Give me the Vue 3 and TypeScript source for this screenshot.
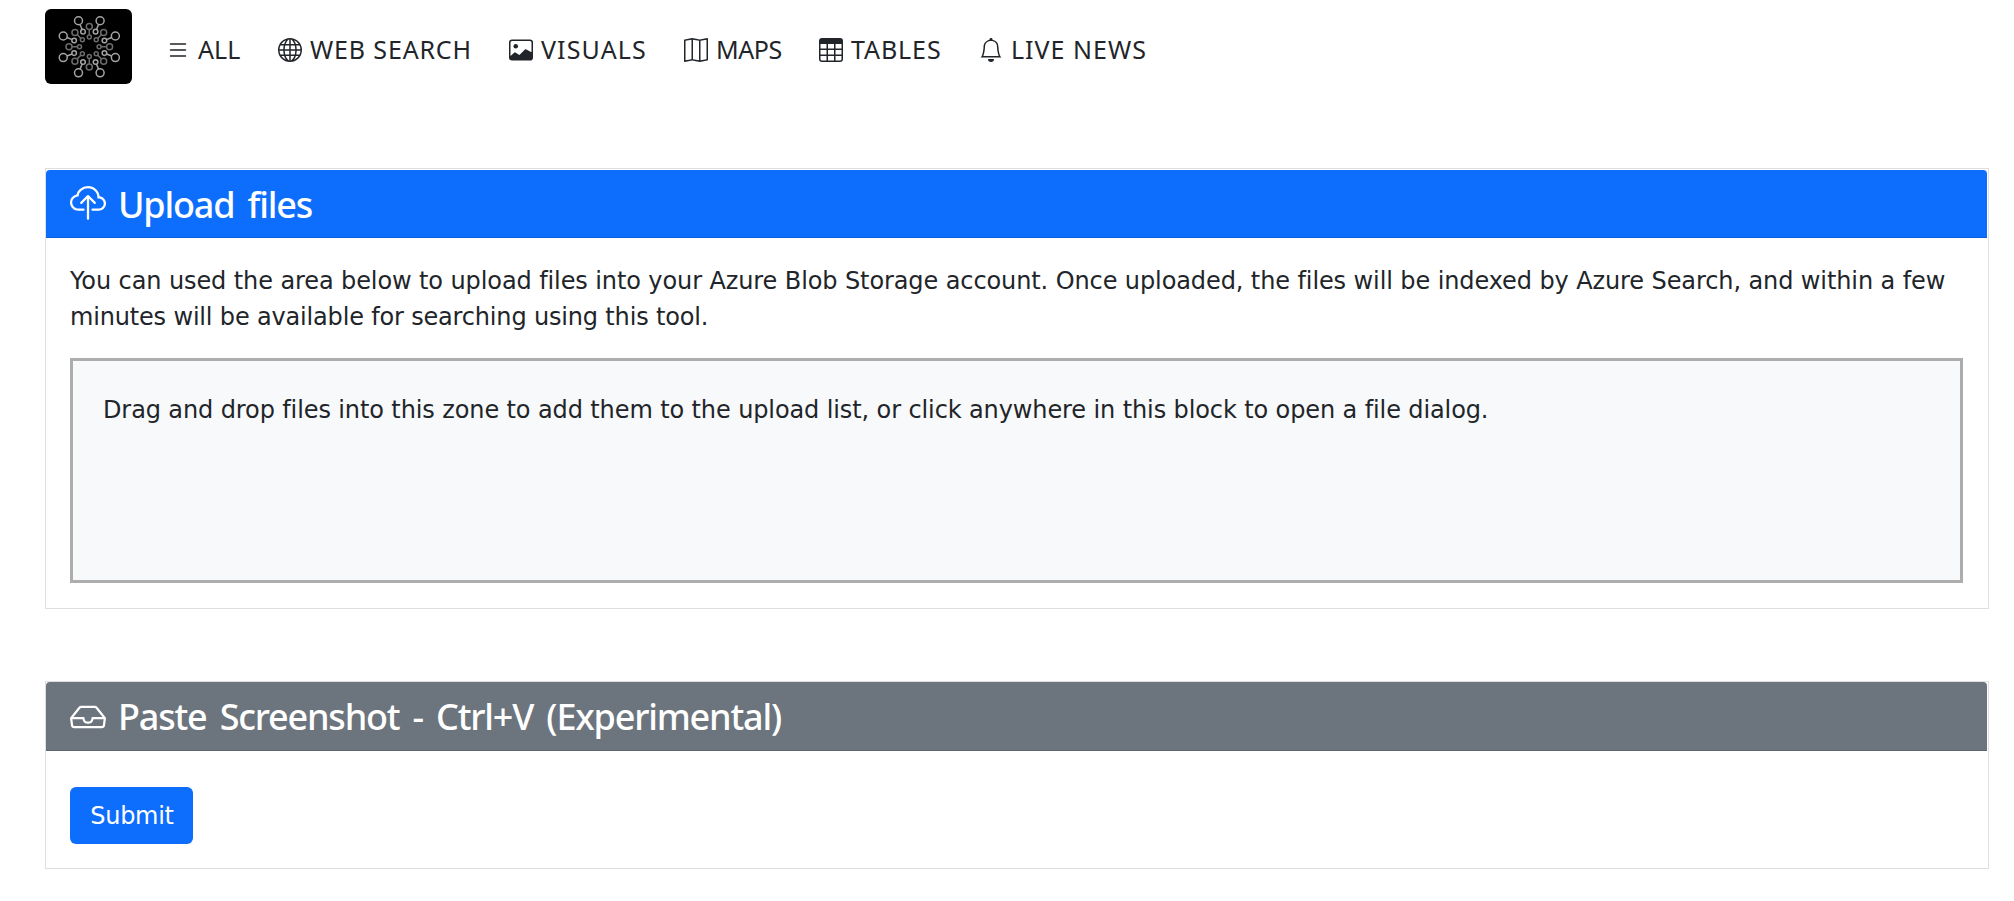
<script setup lang="ts">
interface NavItem {
  label: string
  spacing: number
  icon: string[]
}

interface Node {
  x1: number
  y1: number
  x2: number
  y2: number
}

const navItems: NavItem[] = [
  {
    label: 'ALL',
    spacing: 0.1,
    icon: ['M2.5 12a.5.5 0 0 1 .5-.5h10a.5.5 0 0 1 0 1H3a.5.5 0 0 1-.5-.5zm0-4a.5.5 0 0 1 .5-.5h10a.5.5 0 0 1 0 1H3a.5.5 0 0 1-.5-.5zm0-4a.5.5 0 0 1 .5-.5h10a.5.5 0 0 1 0 1H3a.5.5 0 0 1-.5-.5z'],
  },
  {
    label: 'WEB SEARCH',
    spacing: 0.85,
    icon: ['M0 8a8 8 0 1 1 16 0A8 8 0 0 1 0 8zm7.5-6.923c-.67.204-1.335.82-1.887 1.855A7.97 7.97 0 0 0 5.145 4H7.5V1.077zM4.09 4a9.267 9.267 0 0 1 .64-1.539 6.7 6.7 0 0 1 .597-.933A7.025 7.025 0 0 0 2.255 4H4.09zm-.582 3.5c.03-.877.138-1.718.312-2.5H1.674a6.958 6.958 0 0 0-.656 2.5h2.49zM4.847 5a12.5 12.5 0 0 0-.338 2.5H7.5V5H4.847zM8.5 5v2.5h2.99a12.495 12.495 0 0 0-.337-2.5H8.5zM4.51 8.5a12.5 12.5 0 0 0 .337 2.5H7.5V8.5H4.51zm3.99 0V11h2.653c.187-.765.306-1.608.338-2.5H8.5zM5.145 12c.138.386.295.744.468 1.068.552 1.035 1.218 1.65 1.887 1.855V12H5.145zm.182 2.472a6.696 6.696 0 0 1-.597-.933A9.268 9.268 0 0 1 4.09 12H2.255a7.024 7.024 0 0 0 3.072 2.472zM3.82 11a13.652 13.652 0 0 1-.312-2.5h-2.49c.062.89.291 1.733.656 2.5H3.82zm6.853 3.472A7.024 7.024 0 0 0 13.745 12H11.91a9.27 9.27 0 0 1-.64 1.539 6.688 6.688 0 0 1-.597.933zM8.5 12v2.923c.67-.204 1.335-.82 1.887-1.855.173-.324.33-.682.468-1.068H8.5zm3.68-1h2.146c.365-.767.594-1.61.656-2.5h-2.49a13.65 13.65 0 0 1-.312 2.5zm2.802-3.5a6.959 6.959 0 0 0-.656-2.5H12.18c.174.782.282 1.623.312 2.5h2.49zM11.27 2.461c.247.464.462.98.64 1.539h1.835a7.024 7.024 0 0 0-3.072-2.472c.218.284.418.598.597.933zM10.855 4a7.966 7.966 0 0 0-.468-1.068C9.835 1.897 9.17 1.282 8.5 1.077V4h2.355z'],
  },
  {
    label: 'VISUALS',
    spacing: 1.1,
    icon: [
      'M6.002 5.5a1.5 1.5 0 1 1-3 0 1.5 1.5 0 0 1 3 0z',
      'M2.002 1a2 2 0 0 0-2 2v10a2 2 0 0 0 2 2h12a2 2 0 0 0 2-2V3a2 2 0 0 0-2-2h-12zm12 1a1 1 0 0 1 1 1v6.5l-3.777-1.947a.5.5 0 0 0-.577.093l-3.71 3.71-2.66-1.772a.5.5 0 0 0-.63.062L1.002 12V3a1 1 0 0 1 1-1h12z',
    ],
  },
  {
    label: 'MAPS',
    spacing: -0.4,
    icon: ['M15.817.113A.5.5 0 0 1 16 .5v14a.5.5 0 0 1-.402.49l-5 1a.502.502 0 0 1-.196 0L5.5 15.01l-4.902.98A.5.5 0 0 1 0 15.5v-14a.5.5 0 0 1 .402-.49l5-1a.5.5 0 0 1 .196 0L10.5.99l4.902-.98a.5.5 0 0 1 .415.103zM10 1.91l-4-.8v12.98l4 .8V1.91zm1 12.98 4-.8V1.11l-4 .8v12.98zm-6-.8V1.11l-4 .8v12.98l4-.8z'],
  },
  {
    label: 'TABLES',
    spacing: 0.9,
    icon: ['M0 2a2 2 0 0 1 2-2h12a2 2 0 0 1 2 2v12a2 2 0 0 1-2 2H2a2 2 0 0 1-2-2V2zm15 2h-4v3h4V4zm0 4h-4v3h4V8zm0 4h-4v3h3a1 1 0 0 0 1-1v-2zm-5 3v-3H6v3h4zm-5 0v-3H1v2a1 1 0 0 0 1 1h3zm-4-4h4V8H1v3zm0-4h4V4H1v3zm5-3v3h4V4H6zm4 4H6v3h4V8z'],
  },
  {
    label: 'LIVE NEWS',
    spacing: 1,
    icon: ['M8 16a2 2 0 0 0 2-2H6a2 2 0 0 0 2 2zM8 1.918l-.797.161A4.002 4.002 0 0 0 4 6c0 .628-.134 2.197-.459 3.742-.16.767-.376 1.566-.663 2.258h10.244c-.287-.692-.502-1.49-.663-2.258C12.134 8.197 12 6.628 12 6a4.002 4.002 0 0 0-3.203-3.92L8 1.917zM14.22 12c.223.447.481.801.78 1H1c.299-.199.557-.553.78-1C2.68 10.2 3 6.88 3 6c0-2.42 1.72-4.44 4.005-4.901a1 1 0 1 1 1.99 0A5.002 5.002 0 0 1 13 6c0 .88.32 4.2 1.22 6z'],
  },
]

// Eight spokes around the logo centre, each joining an inner and an outer ring
function spokes(offset: number, inner: number, outer: number): Node[] {
  return Array.from({ length: 8 }, (_, i) => {
    const a = ((offset + i * 45) * Math.PI) / 180
    return {
      x1: Math.cos(a) * inner,
      y1: Math.sin(a) * inner,
      x2: Math.cos(a) * outer,
      y2: Math.sin(a) * outer,
    }
  })
}

// Shortens a spoke so its line stops at the edge of both rings
function link(n: Node, ri: number, ro: number): string {
  const len = Math.hypot(n.x2 - n.x1, n.y2 - n.y1)
  const ux = (n.x2 - n.x1) / len
  const uy = (n.y2 - n.y1) / len
  return `M${n.x1 + ux * ri} ${n.y1 + uy * ri}L${n.x2 - ux * ro} ${n.y2 - uy * ro}`
}

const longSpokes = spokes(22.5, 16.4, 28.2)
const shortSpokes = spokes(0, 9.8, 20.3)
</script>

<template>
  <div class="page">
    <header class="topbar">
      <svg class="logo" viewBox="-44.3 -37.8 87 75">
        <g class="short">
          <template v-for="(n, i) in shortSpokes" :key="i">
            <circle :cx="n.x1" :cy="n.y1" r="2" />
            <circle :cx="n.x2" :cy="n.y2" r="3" />
            <path :d="link(n, 2, 3)" />
          </template>
        </g>
        <g class="long">
          <template v-for="(n, i) in longSpokes" :key="i">
            <circle :cx="n.x1" :cy="n.y1" r="2.3" />
            <circle :cx="n.x2" :cy="n.y2" r="4" />
            <path :d="link(n, 2.3, 4)" />
          </template>
        </g>
      </svg>
      <nav class="nav">
        <a v-for="item in navItems" :key="item.label" class="nav-item">
          <svg class="nav-icon" viewBox="0 0 16 16">
            <path v-for="d in item.icon" :key="d" :d="d" fill-rule="evenodd" />
          </svg>
          <span :style="{ letterSpacing: item.spacing + 'px' }">{{ item.label }}</span>
        </a>
      </nav>
    </header>

    <main class="content">
      <section class="card upload">
        <h3 class="card-header primary">
          <svg class="head-icon" viewBox="0 0 16 16">
            <path d="M4.406 1.342A5.53 5.53 0 0 1 8 0c2.69 0 4.923 2 5.166 4.579C14.758 4.804 16 6.137 16 7.773 16 9.569 14.502 11 12.687 11H10a.5.5 0 0 1 0-1h2.688C13.979 10 15 8.988 15 7.773c0-1.216-1.02-2.228-2.313-2.228h-.5v-.5C12.188 2.825 10.328 1 8 1a4.53 4.53 0 0 0-2.941 1.1c-.757.652-1.153 1.438-1.153 2.055v.448l-.445.049C2.064 4.805 1 5.952 1 7.318 1 8.785 2.23 10 3.781 10H6a.5.5 0 0 1 0 1H3.781C1.708 11 0 9.366 0 7.318c0-1.763 1.266-3.223 2.942-3.593.143-.863.698-1.723 1.464-2.383z" />
            <path d="M7.646 4.146a.5.5 0 0 1 .708 0l3 3a.5.5 0 0 1-.708.708L8.5 5.707V14.5a.5.5 0 0 1-1 0V5.707L5.354 7.854a.5.5 0 1 1-.708-.708l3-3z" />
          </svg>
          <span>Upload files</span>
        </h3>
        <div class="card-body">
          <p class="intro">
            You can used the area below to upload files into your Azure Blob Storage account. Once uploaded, the files will be indexed by Azure Search, and within a few<br />
            <span class="second">minutes will be available for searching using this tool.</span>
          </p>
          <div class="dropzone">
            Drag and drop files into this zone to add them to the upload list, or click anywhere in this block to open a file dialog.
          </div>
        </div>
      </section>

      <section class="card paste">
        <h3 class="card-header secondary">
          <svg class="head-icon" viewBox="0 0 16 16">
            <path d="M4.98 4a.5.5 0 0 0-.39.188L1.54 8H6a.5.5 0 0 1 .5.5 1.5 1.5 0 1 0 3 0A.5.5 0 0 1 10 8h4.46l-3.05-3.812A.5.5 0 0 0 11.02 4H4.98zm9.954 5H10.45a2.5 2.5 0 0 1-4.9 0H1.066l.32 2.562a.5.5 0 0 0 .497.438h12.234a.5.5 0 0 0 .496-.438L14.933 9zM3.809 3.563A1.5 1.5 0 0 1 4.981 3h6.038a1.5 1.5 0 0 1 1.172.563l3.7 4.625a.5.5 0 0 1 .105.374l-.39 3.124A1.5 1.5 0 0 1 14.117 13H1.883a1.5 1.5 0 0 1-1.489-1.314l-.39-3.124a.5.5 0 0 1 .106-.374l3.7-4.625z" />
          </svg>
          <span>Paste Screenshot - Ctrl+V (Experimental)</span>
        </h3>
        <div class="card-body">
          <button class="submit" type="button">Submit</button>
        </div>
      </section>
    </main>
  </div>
</template>

<style>
body {
  background: #fff;
}
</style>

<style scoped>
.page {
  box-sizing: border-box;
  height: 901px;
  padding: 9px 25px 0 45px;
  overflow: hidden;
  color: #212529;
  font-family: "DejaVu Sans", sans-serif;
  font-size: 24px;
  line-height: 36px;
}

.topbar {
  display: flex;
  align-items: flex-start;
  height: 159px;
}

.logo {
  width: 87px;
  height: 75px;
  border-radius: 6px;
  background: #000;
  fill: none;
  stroke-width: 1.5;
}

.short {
  stroke: #6c6c6c;
}

.long {
  stroke: #a4a4a4;
}

.nav {
  display: grid;
  grid-template-columns: 112px 231px 175px 135px 160px auto;
  margin: 22px 0 0 34px;
  font-family: "Noto Sans", sans-serif;
  font-size: 25px;
  white-space: nowrap;
}

.nav-item {
  display: flex;
  gap: 8px;
  height: 36px;
}

.nav-icon {
  flex: none;
  width: 24px;
  height: 24px;
  margin-top: 7px;
  fill: currentColor;
}

.card {
  box-sizing: border-box;
  border: 1px solid #dfdfdf;
  background: #fff;
}

.upload {
  height: 441px;
  padding-top: 1px;
}

.paste {
  height: 188px;
  margin-top: 72px;
}

.card-header {
  box-sizing: border-box;
  display: flex;
  gap: 12px;
  margin: 0 1px 0 0;
  padding-left: 24px;
  border-bottom: 1px solid rgba(0, 0, 0, 0.125);
  border-radius: 4px 4px 0 0;
  color: #fff;
  font-family: "Noto Sans", sans-serif;
  font-size: 36px;
  font-weight: 500;
  line-height: 70px;
  letter-spacing: -1.2px;
  word-spacing: 5px;
  white-space: nowrap;
}

.primary {
  height: 68px;
  background: #0d6efd;
}

.secondary {
  height: 69px;
  background: #6c757d;
}

.head-icon {
  flex: none;
  width: 36px;
  height: 36px;
  margin-top: 16px;
  fill: currentColor;
}

.secondary .head-icon {
  margin-top: 17px;
}

.card-body {
  padding: 24px 25px 24px 24px;
}

.intro {
  margin: 0;
  padding-top: 1px;
  letter-spacing: -0.1px;
  white-space: nowrap;
}

.second {
  letter-spacing: -0.17px;
}

.dropzone {
  box-sizing: border-box;
  height: 225px;
  margin-top: 23px;
  padding: 31px 30px 30px;
  border: 3px solid #adadad;
  background: #f8f9fa;
  letter-spacing: -0.11px;
  white-space: nowrap;
}

.submit {
  display: block;
  box-sizing: border-box;
  width: 123px;
  height: 57px;
  margin-top: 12px;
  padding: 0 0 0 1px;
  border: 0;
  border-radius: 6px;
  background: #0d6efd;
  color: #fff;
  font: inherit;
  letter-spacing: -0.3px;
}
</style>
